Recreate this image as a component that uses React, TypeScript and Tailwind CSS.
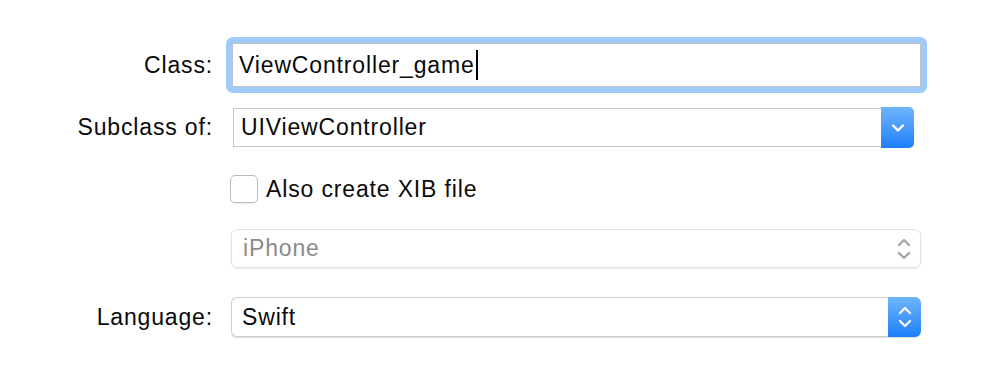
import React from "react";

const font = { fontFamily: '"Liberation Sans", Arial, sans-serif' };

function UpDown({ color }: { color: string }) {
  return (
    <svg width="14" height="26" viewBox="0 0 14 26" fill="none">
      <path d="M2 9 L7 4 L12 9" stroke={color} strokeWidth="2.2" strokeLinecap="round" strokeLinejoin="round" />
      <path d="M2 17 L7 22 L12 17" stroke={color} strokeWidth="2.2" strokeLinecap="round" strokeLinejoin="round" />
    </svg>
  );
}

export default function App() {
  return (
    <div
      className="w-[992px] h-[370px] bg-white text-[23px] text-[#0a0a0a] tracking-[0.85px] flex flex-col pt-[37px]"
      style={font}
    >
      {/* Class */}
      <div className="flex items-center h-[56px]">
        <div className="w-[213px] text-right">Class:</div>
        <div className="ml-[13px] w-[701px] h-[56px] rounded-[7px] bg-[#9fcafa] p-[6px]">
          <div className="h-[44px] bg-white border border-[#c2c2c2] flex items-center pl-[6px]">
            <span>ViewController_game</span>
            <span className="inline-block w-[2px] h-[30px] bg-black ml-[1px]" />
          </div>
        </div>
      </div>

      {/* Subclass */}
      <div className="flex items-center mt-[14px] h-[41px]">
        <div className="w-[213px] text-right">Subclass of:</div>
        <div className="ml-[20px] w-[681px] h-[41px] flex">
          <div className="flex-1 h-[39px] mt-[1px] border border-[#c8c8c8] border-r-0 bg-white flex items-center pl-[7px]">
            UIViewController
          </div>
          <div className="w-[33px] h-[41px] rounded-r-[5px] bg-gradient-to-b from-[#6db4fb] to-[#1a7ffb] flex items-center justify-center">
            <svg width="14" height="10" viewBox="0 0 14 10" fill="none">
              <path d="M2 2.5 L7 7.5 L12 2.5" stroke="white" strokeWidth="2.4" strokeLinecap="round" strokeLinejoin="round" />
            </svg>
          </div>
        </div>
      </div>

      {/* Checkbox */}
      <div className="flex items-center mt-[26px] h-[30px]">
        <div className="w-[230px]" />
        <div className="w-[28px] h-[28px] rounded-[5px] border border-[#bdbdbd] bg-white shadow-[0_1px_1px_rgba(0,0,0,0.08)]" />
        <div className="ml-[8px]">Also create XIB file</div>
      </div>

      {/* Device */}
      <div className="flex items-center mt-[25px] h-[39px]">
        <div className="w-[231px]" />
        <div className="w-[690px] h-[39px] rounded-[6px] border border-[#e0e0e0] bg-white shadow-[0_1px_1px_rgba(0,0,0,0.08)] flex items-center pl-[11px] pr-[9px]">
          <span className="flex-1 text-[#8b8b8b]">iPhone</span>
          <UpDown color="#a3a3a3" />
        </div>
      </div>

      {/* Language */}
      <div className="flex items-center mt-[29px] h-[40px]">
        <div className="w-[213px] text-right">Language:</div>
        <div className="ml-[18px] w-[690px] h-[40px] flex rounded-[6px] shadow-[0_1px_1px_rgba(0,0,0,0.15)]">
          <div className="flex-1 h-[40px] rounded-l-[6px] border border-[#cfcfcf] border-r-0 bg-white flex items-center pl-[10px]">
            Swift
          </div>
          <div className="w-[33px] h-[40px] rounded-r-[6px] bg-gradient-to-b from-[#6db4fb] to-[#1a7ffb] flex items-center justify-center">
            <UpDown color="white" />
          </div>
        </div>
      </div>
    </div>
  );
}
